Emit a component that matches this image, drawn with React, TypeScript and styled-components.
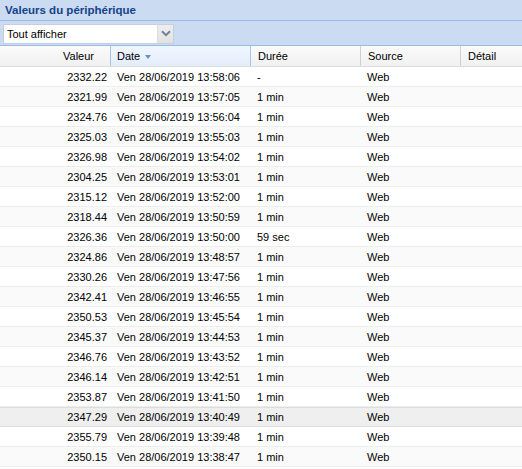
import React from "react";
import styled, { createGlobalStyle } from "styled-components";

const Global = createGlobalStyle`
  html, body { margin: 0; padding: 0; background: #fff; }
  body { font-family: "Liberation Sans", Arial, Helvetica, sans-serif; font-size: 11px; color: #000; }
`;

const Panel = styled.div`
  width: 522px;
  display: flex;
  flex-direction: column;
`;

const TitleBar = styled.div`
  height: 21px;
  box-sizing: border-box;
  background: #cbdbf1;
  border-bottom: 1px solid #99bbe8;
  color: #15428b;
  font-weight: bold;
  font-size: 11.5px;
  display: flex;
  align-items: center;
  padding-left: 5px;
`;

const Toolbar = styled.div`
  height: 25px;
  box-sizing: border-box;
  background: #cbdbf1;
  border-bottom: 1px solid #99bbe8;
  display: flex;
  align-items: center;
  padding: 2px 3px 1px;
`;

const Combo = styled.div`
  display: flex;
  height: 20px;
  width: 171px;
  box-sizing: border-box;
`;

const ComboInput = styled.div`
  flex: 1;
  background: #fff;
  border: 1px solid #c4cfdf;
  border-right: none;
  display: flex;
  align-items: center;
  padding-left: 3px;
  font-size: 11px;
`;

const ComboTrigger = styled.div`
  width: 17px;
  background: linear-gradient(#eeeeee, #e2e2e2);
  border: 1px solid #c4cfdf;
  border-left: 1px solid #dcdcdc;
  display: flex;
  align-items: center;
  justify-content: center;
  box-sizing: border-box;
`;

const Grid = styled.div`
  display: flex;
  flex-direction: column;
`;

const cols = [111, 140, 110, 100, 61];

const HeaderRow = styled.div`
  display: flex;
  height: 21px;
  box-sizing: border-box;
  background: linear-gradient(#fbfbfb, #f1f1f1);
  border-bottom: 1px solid #dcdcdc;
`;

const HeaderCell = styled.div<{ $w: number; $right?: boolean; $sorted?: boolean }>`
  width: ${(p) => p.$w}px;
  flex: none;
  box-sizing: border-box;
  display: flex;
  align-items: center;
  justify-content: ${(p) => (p.$right ? "flex-end" : "flex-start")};
  padding: ${(p) => (p.$right ? "0 16px 0 0" : "0 0 0 6px")};
  border-right: 1px solid ${(p) => (p.$sorted ? "#a9c3e6" : "#d0d0d0")};
  border-left: 1px solid ${(p) => (p.$sorted ? "#a9c3e6" : "transparent")};
  margin-left: ${(p) => (p.$sorted ? "-1px" : "0")};
  background: ${(p) => (p.$sorted ? "linear-gradient(#f0f6fe, #e3eefb)" : "transparent")};
  color: #000;
  &:last-child { border-right: none; flex: 1; }
`;

const SortArrow = styled.span`
  display: inline-block;
  width: 0;
  height: 0;
  border-left: 3.5px solid transparent;
  border-right: 3.5px solid transparent;
  border-top: 4px solid #6a8fc8;
  margin-left: 5px;
  margin-top: 1px;
`;

const Row = styled.div<{ $alt: boolean; $over: boolean }>`
  display: flex;
  height: 20px;
  box-sizing: border-box;
  border-top: 1px solid ${(p) => (p.$over ? "#dddddd" : p.$alt ? "#fafafa" : "#ffffff")};
  border-bottom: 1px solid ${(p) => (p.$over ? "#dddddd" : "#ededed")};
  background: ${(p) => (p.$over ? "#efefef" : p.$alt ? "#fafafa" : "#ffffff")};
`;

const Cell = styled.div<{ $w: number; $right?: boolean }>`
  width: ${(p) => p.$w}px;
  flex: none;
  box-sizing: border-box;
  display: flex;
  align-items: center;
  justify-content: ${(p) => (p.$right ? "flex-end" : "flex-start")};
  padding: ${(p) => (p.$right ? "0 4px 0 0" : "0 0 0 6px")};
  white-space: nowrap;
  &:last-child { flex: 1; }
`;

const data: [string, string, string][] = [
  ["2332.22", "13:58:06", "-"],
  ["2321.99", "13:57:05", "1 min"],
  ["2324.76", "13:56:04", "1 min"],
  ["2325.03", "13:55:03", "1 min"],
  ["2326.98", "13:54:02", "1 min"],
  ["2304.25", "13:53:01", "1 min"],
  ["2315.12", "13:52:00", "1 min"],
  ["2318.44", "13:50:59", "1 min"],
  ["2326.36", "13:50:00", "59 sec"],
  ["2324.86", "13:48:57", "1 min"],
  ["2330.26", "13:47:56", "1 min"],
  ["2342.41", "13:46:55", "1 min"],
  ["2350.53", "13:45:54", "1 min"],
  ["2345.37", "13:44:53", "1 min"],
  ["2346.76", "13:43:52", "1 min"],
  ["2346.14", "13:42:51", "1 min"],
  ["2353.87", "13:41:50", "1 min"],
  ["2347.29", "13:40:49", "1 min"],
  ["2355.79", "13:39:48", "1 min"],
  ["2350.15", "13:38:47", "1 min"],
];

export default function App() {
  return (
    <>
      <Global />
      <Panel>
        <TitleBar>Valeurs du périphérique</TitleBar>
        <Toolbar>
          <Combo>
            <ComboInput>Tout afficher</ComboInput>
            <ComboTrigger>
              <svg width="10" height="7" viewBox="0 0 10 7">
                <path d="M1 1.2 L5 5.2 L9 1.2" fill="none" stroke="#6f809a" strokeWidth="2" />
              </svg>
            </ComboTrigger>
          </Combo>
        </Toolbar>
        <Grid>
          <HeaderRow>
            <HeaderCell $w={cols[0]} $right>Valeur</HeaderCell>
            <HeaderCell $w={cols[1] + 1} $sorted>
              Date<SortArrow />
            </HeaderCell>
            <HeaderCell $w={cols[2]}>Durée</HeaderCell>
            <HeaderCell $w={cols[3]}>Source</HeaderCell>
            <HeaderCell $w={cols[4]}>Détail</HeaderCell>
          </HeaderRow>
          {data.map(([v, t, d], i) => (
            <Row key={i} $alt={i % 2 === 1} $over={i === 17}>
              <Cell $w={cols[0]} $right>{v}</Cell>
              <Cell $w={cols[1]}>Ven 28/06/2019 {t}</Cell>
              <Cell $w={cols[2]}>{d}</Cell>
              <Cell $w={cols[3]}>Web</Cell>
              <Cell $w={cols[4]}></Cell>
            </Row>
          ))}
        </Grid>
      </Panel>
    </>
  );
}
